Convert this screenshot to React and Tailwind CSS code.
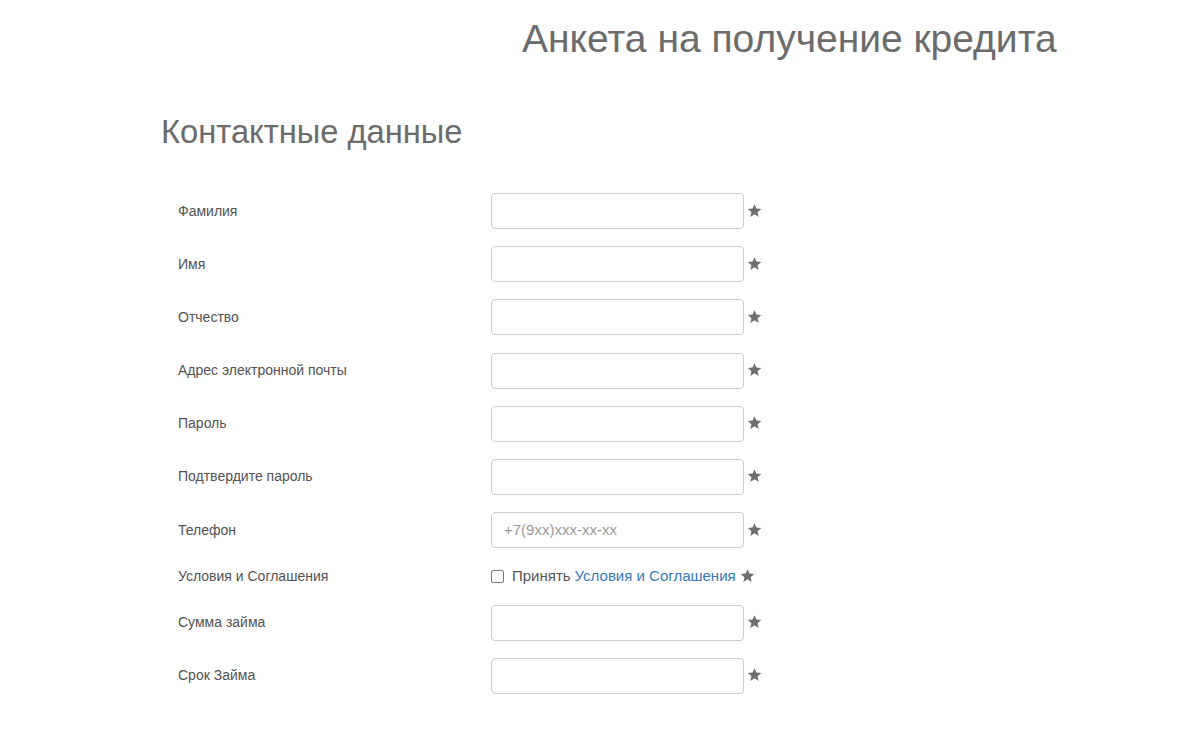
import React from "react";

const Star = () => (
  <svg width="15" height="15" viewBox="0 0 24 24" className="shrink-0">
    <path
      d="M12 1.8l3.1 7.1 7.7.6-5.9 5.1 1.8 7.6L12 18.1l-6.7 4.1 1.8-7.6-5.9-5.1 7.7-.6z"
      fill="#6f6f6f"
    />
  </svg>
);

const fields = [
  { label: "Фамилия" },
  { label: "Имя" },
  { label: "Отчество" },
  { label: "Адрес электронной почты" },
  { label: "Пароль" },
  { label: "Подтвердите пароль" },
  { label: "Телефон", placeholder: "+7(9xx)xxx-xx-xx" },
  { label: "Условия и Соглашения", checkbox: true },
  { label: "Сумма займа" },
  { label: "Срок Займа" },
];

export default function App() {
  return (
    <div
      className="w-[1200px] h-[742px] bg-white overflow-hidden"
      style={{ fontFamily: '"Liberation Sans", Arial, sans-serif' }}
    >
      <div className="pl-[522px] pt-[16px]">
        <h1 className="text-[39px] leading-[46px] text-[#6b6b6b] font-normal">
          Анкета на получение кредита
        </h1>
      </div>
      <div className="pl-[161px] pt-[50px]">
        <h2 className="text-[32.7px] leading-[40px] text-[#6b6b6b] font-normal">
          Контактные данные
        </h2>
      </div>
      <div className="pl-[178px] pt-[41px] flex flex-col gap-y-[17.2px]">
        {fields.map((f) => (
          <div
            key={f.label}
            className={`flex items-center ${f.checkbox ? "h-[22px]" : "h-[36px]"}`}
          >
            <div className="w-[313px] text-[14px] text-[#525252]">{f.label}</div>
            {f.checkbox ? (
              <div className="flex items-center">
                <span className="w-[13px] h-[13px] border border-[#767676] rounded-[2px] bg-white mr-[8px]" />
                <span className="text-[15px] text-[#555555]">Принять</span>
                <span className="text-[15px] text-[#337ab7] ml-[4px]">Условия и Соглашения</span>
                <span className="ml-[4px] -mt-[2px]">
                  <Star />
                </span>
              </div>
            ) : (
              <div className="flex items-center">
                <div className="w-[253px] h-[36px] border border-[#cccccc] rounded-[4px] bg-white flex items-center pl-[12px] text-[15px] text-[#9a9a9a]">
                  {f.placeholder || ""}
                </div>
                <span className="ml-[3px] -mt-[2px]">
                  <Star />
                </span>
              </div>
            )}
          </div>
        ))}
      </div>
    </div>
  );
}
